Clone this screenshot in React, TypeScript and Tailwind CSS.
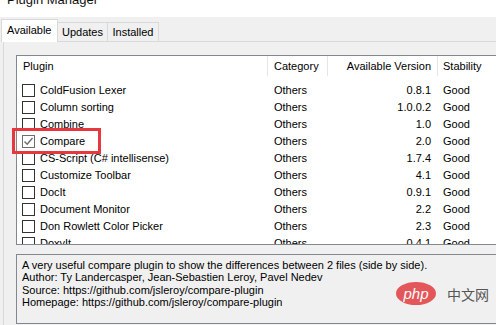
import React from "react";

const rows: [string, string, string, boolean][] = [
  ["ColdFusion Lexer", "Others", "0.8.1", false],
  ["Column sorting", "Others", "1.0.0.2", false],
  ["Combine", "Others", "1.0", false],
  ["Compare", "Others", "2.0", true],
  ["CS-Script (C# intellisense)", "Others", "1.7.4", false],
  ["Customize Toolbar", "Others", "4.1", false],
  ["DocIt", "Others", "0.9.1", false],
  ["Document Monitor", "Others", "2.2", false],
  ["Don Rowlett Color Picker", "Others", "2.3", false],
  ["DoxyIt", "Others", "0.4.1", false],
];

function Check({ checked }: { checked: boolean }) {
  return (
    <div
      className={
        "w-[13px] h-[13px] shrink-0 bg-white border flex items-center justify-center " +
        (checked ? "border-[#6d6d6d]" : "border-[#333333]")
      }
    >
      {checked && (
        <svg width="11" height="11" viewBox="0 0 11 11">
          <path d="M1.5 5.5 L4.2 8.2 L9.5 2" fill="none" stroke="#6d6d6d" strokeWidth="1.4" />
        </svg>
      )}
    </div>
  );
}

export default function App() {
  return (
    <div
      className="relative w-[496px] h-[325px] overflow-hidden bg-[#f0f0f0] text-black text-[11px]"
      style={{ fontFamily: '"Liberation Sans", Arial, sans-serif' }}
    >
      <div className="h-[17px] bg-white overflow-hidden pl-[7px]">
        <div className="text-[13px] leading-[14px] mt-[-7px] text-[#111]">Plugin Manager</div>
      </div>
      <div className="flex items-end h-[24px] pl-[1px]">
        <div className="w-[57px] bg-white border border-b-0 border-[#d9d9d9] flex items-start pt-[2px] pl-[5px] relative z-10 mb-[-1px] h-[23px]">
          Available
        </div>
        <div className="h-[19px] w-[50px] border border-b-0 border-l-0 border-[#d9d9d9] flex items-center justify-center pt-[1px]">
          Updates
        </div>
        <div className="h-[19px] w-[51px] border border-b-0 border-l-0 border-[#d9d9d9] flex items-center justify-center pt-[1px]">
          Installed
        </div>
      </div>
      <div className="pl-[3px]">
        <div className="border-t border-l border-[#d9d9d9] pl-[12px] pt-[13px] h-[300px]">
          <div className="w-[600px] h-[190px] border border-[#828790] bg-white overflow-hidden">
            <div className="flex h-[20px] items-center">
              <div className="w-[250px] pl-[6px]">Plugin</div>
              <div className="w-[60px] pl-[6px] border-l border-[#e5e5e5] h-full flex items-center">Category</div>
              <div className="w-[110px] pr-[6px] border-l border-[#e5e5e5] h-full flex items-center justify-end">
                Available Version
              </div>
              <div className="w-[100px] pl-[5px] border-l border-[#e5e5e5] h-full flex items-center">Stability</div>
            </div>
            <div className="pt-[6px]">
              {rows.map(([name, cat, ver, checked]) => (
                <div key={name} className="flex h-[17px] items-center">
                  <div className="w-[250px] pl-[5px] flex items-center gap-[5px]">
                    <Check checked={checked} />
                    <span>{name}</span>
                  </div>
                  <div className="w-[60px] pl-[7px]">{cat}</div>
                  <div className="w-[110px] pr-[6px] text-right">{ver}</div>
                  <div className="w-[100px] pl-[6px]">Good</div>
                </div>
              ))}
            </div>
          </div>
          <div className="mt-[9px] w-[600px] h-[70px] border border-[#828790] pl-[5px] pt-[4px] leading-[12.4px]">
            <div>A very useful compare plugin to show the differences between 2 files (side by side).</div>
            <div>Author: Ty Landercasper, Jean-Sebastien Leroy, Pavel Nedev</div>
            <div>Source: https://github.com/jsleroy/compare-plugin</div>
            <div>Homepage: https://github.com/jsleroy/compare-plugin</div>
          </div>
        </div>
      </div>
      <div className="absolute left-[12px] top-[128px] w-[89px] h-[26px] border-[3px] border-[#e5393f]" />
      <div className="absolute left-[396px] top-[282px] flex items-center gap-[11px]">
        <div className="w-[40px] h-[23px] rounded-[50%] bg-[#e2474b] opacity-90 flex items-center justify-center text-white italic text-[15px] leading-none">
          php
        </div>
        <div
          className="text-[#555] text-[14px] leading-none"
          style={{ fontFamily: '"Noto Sans CJK SC", sans-serif' }}
        >
          中文网
        </div>
      </div>
    </div>
  );
}
